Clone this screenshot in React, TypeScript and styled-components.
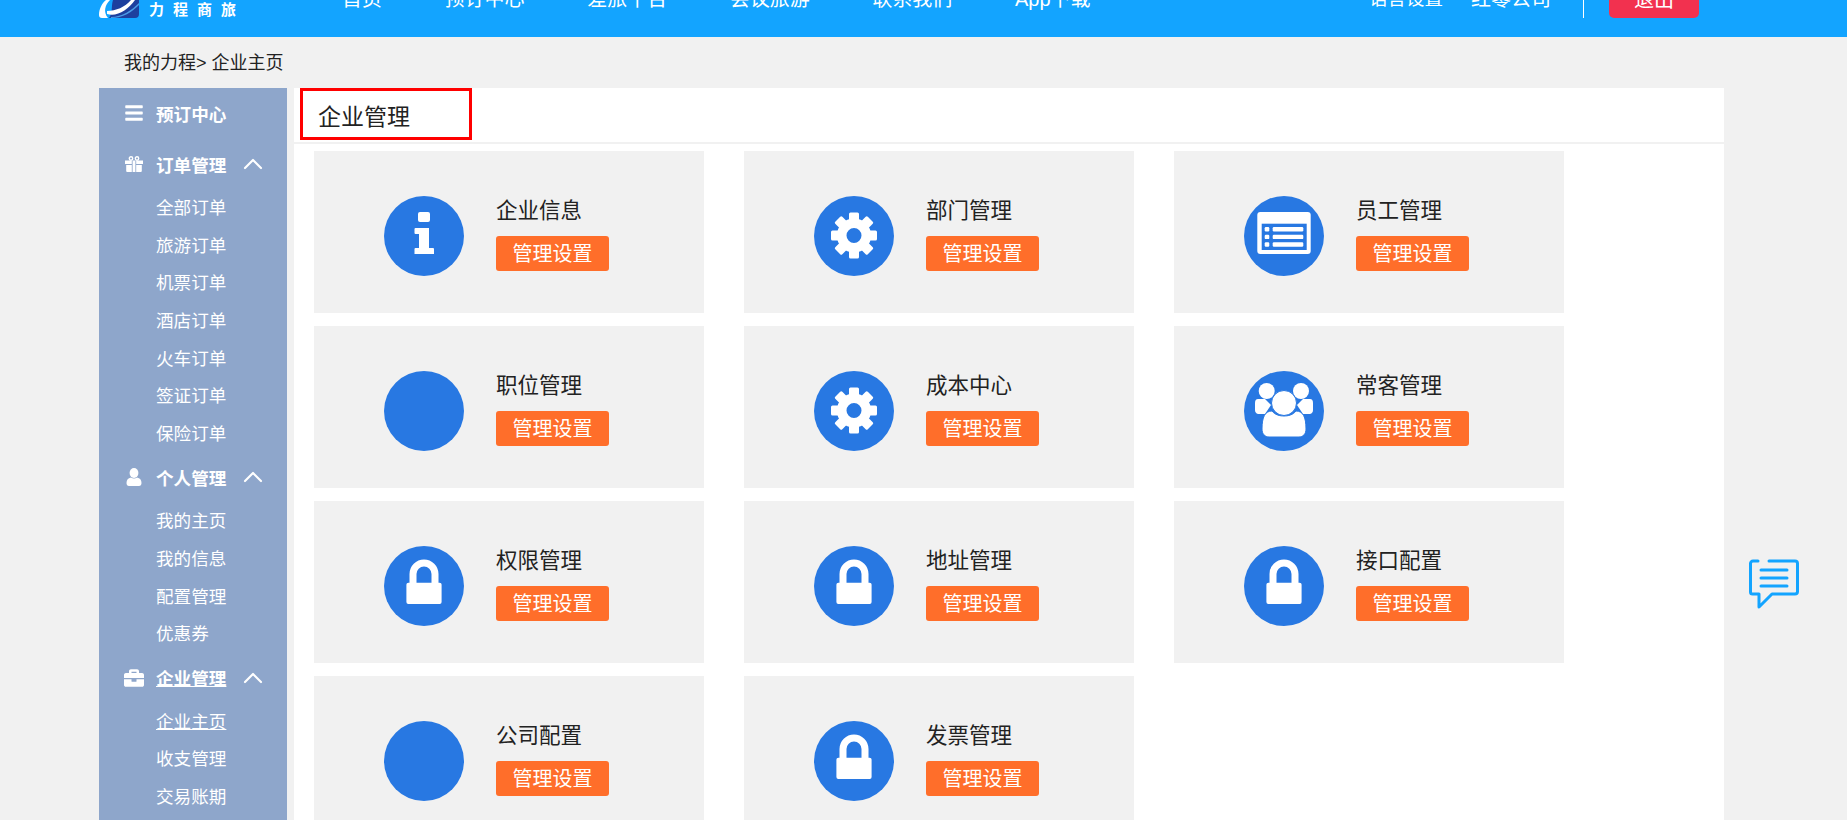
import * as React from 'react'
import styled, { createGlobalStyle } from 'styled-components'
import { FaBars, FaBriefcase } from 'react-icons/fa'
import { ChevronUp } from 'lucide-react'

const fontStack = '"Liberation Sans", "Noto Sans CJK SC", sans-serif';

const GlobalStyle = createGlobalStyle`
    html, body {
        margin: 0;
        padding: 0;
        background: #f1f1f1;
        font-family: ${fontStack};
    }
`;

//=================================/
const Page = styled.div`
    height: 100vh;
    overflow: hidden;
    display: flex;
    flex-direction: column;
    background: #f1f1f1;
`;

const Header = styled.header`
    flex: none;
    height: 37px;
    box-sizing: border-box;
    padding: 0 148px 0 99px;
    display: flex;
    align-items: flex-end;
    overflow: hidden;
    background: #13a4ff;
    color: #fff;
`;

const Logo = styled.div`
    flex: none;
    width: 204px;
    display: flex;
    align-items: flex-end;
    gap: 10px;
    padding-bottom: 19px;
`;

const LogoText = styled.span`
    font-size: 15px;
    font-weight: 700;
    letter-spacing: 9px;
    line-height: 20px;
    margin-bottom: -2px;
    white-space: nowrap;
`;

const MainNav = styled.nav`
    margin-left: 39px;
    display: flex;
    gap: 62.6px;
    padding-bottom: 24px;
`;

const NavItem = styled.span`
    font-size: 20px;
    line-height: 28px;
    white-space: nowrap;
`;

const UserBar = styled.div`
    margin-left: auto;
    display: flex;
    align-items: flex-end;
`;

const UserItem = styled.span<{ $size: number; $gap: number }>`
    font-size: ${props => props.$size}px;
    line-height: 28px;
    margin-right: ${props => props.$gap}px;
    padding-bottom: 24px;
    white-space: nowrap;
`;

const Divider = styled.span`
    width: 1px;
    height: 40px;
    margin: 0 25px 19px 0;
    background: #fff;
`;

const LogoutButton = styled.span`
    width: 90px;
    height: 48px;
    margin-bottom: 19px;
    border-radius: 0 0 5px 5px;
    background: #f2314f;
    font-size: 20px;
    line-height: 28px;
    text-align: center;
    padding-top: 16px;
    box-sizing: border-box;
`;

const Crumb = styled.div`
    flex: none;
    height: 51px;
    padding: 0 0 0 124px;
    font-size: 18px;
    line-height: 52px;
    color: #222;
    white-space: pre;
`;

const Body = styled.div`
    flex: 1;
    min-height: 0;
    display: flex;
    gap: 7px;
    padding-left: 99px;
`;

//=================================/
const Sidebar = styled.aside`
    flex: none;
    width: 188px;
    padding-top: 3px;
    background: #8ea6cb;
    color: #fff;
`;

const MenuHead = styled.div<{ $solo?: boolean }>`
    height: 44px;
    margin-bottom: ${props => props.$solo ? 7 : 4}px;
    padding-left: 25px;
    display: flex;
    align-items: center;
    font-size: 17.6px;
    font-weight: 700;
`;

const MenuIcon = styled.span`
    flex: none;
    width: 20px;
    margin-right: 12px;
    display: flex;
    justify-content: center;
`;

const MenuLabel = styled.span<{ $active?: boolean }>`
    text-decoration: ${props => props.$active ? 'underline' : 'none'};
`;

const MenuArrow = styled(ChevronUp)`
    margin-left: 11px;
`;

const SubMenu = styled.div`
    margin-bottom: 1.5px;
`;

const SubItem = styled.div<{ $active?: boolean }>`
    height: 37.7px;
    padding-left: 57px;
    font-size: 17.6px;
    line-height: 37.7px;
    text-decoration: ${props => props.$active ? 'underline' : 'none'};
`;

//=================================/
const Main = styled.main`
    flex: none;
    width: 1430px;
    background: #fff;
`;

const TitleBar = styled.div`
    height: 54px;
    padding-left: 6px;
    border-bottom: 2px solid #f1f1f1;
`;

const TitleBox = styled.h1`
    width: 172px;
    height: 52px;
    margin: 0;
    box-sizing: border-box;
    border: 3px solid #f00;
    padding-left: 15px;
    font-size: 23px;
    font-weight: 400;
    line-height: 52px;
    color: #222;
`;

const CardGrid = styled.div`
    display: grid;
    grid-template-columns: repeat(3, 390px);
    grid-auto-rows: 162px;
    column-gap: 40px;
    row-gap: 13px;
    padding: 7px 0 0 20px;
`;

const Card = styled.div`
    box-sizing: border-box;
    padding: 45px 0 0 70px;
    display: flex;
    gap: 32px;
    background: #f1f1f1;
`;

const Badge = styled.svg`
    flex: none;
    width: 80px;
    height: 80px;
`;

const CardText = styled.div`
    display: flex;
    flex-direction: column;
    align-items: flex-start;
    gap: 12px;
`;

const CardName = styled.div`
    height: 28px;
    font-size: 21.5px;
    line-height: 30px;
    color: #222;
`;

const SetupButton = styled.span`
    width: 113px;
    height: 35px;
    border-radius: 3px;
    background: #ff6e2a;
    color: #fff;
    font-size: 20px;
    line-height: 37px;
    text-align: center;
`;

const ChatFloat = styled.svg`
    position: fixed;
    left: 1749px;
    top: 559px;
    width: 50px;
    height: 50px;
`;
//=================================/

const BLUE = '#2878e2';

const InfoGlyph = () => (
    <g fill="#fff">
        <rect x="34" y="16" width="12" height="10" rx="2" />
        <path d="M30.5 33a1 1 0 0 1 1-1H45v20h4a1 1 0 0 1 1 1v5H30.5v-5a1 1 0 0 1 1-1H35V38h-3.5a1 1 0 0 1-1-1z" />
    </g>
);

const GearGlyph = () => (
    <g fill="#fff">
        {[0, 45, 90, 135, 180, 225, 270, 315].map(a => (
            <rect key={a} x="35" y="16.5" width="10" height="10" rx="1.5" transform={`rotate(${a} 40 39.5)`} />
        ))}
        <circle cx="40" cy="39.5" r="12.3" fill="none" stroke="#fff" strokeWidth="9.6" />
    </g>
);

const ListGlyph = () => (
    <g>
        <rect x="13.3" y="16" width="53.4" height="42" rx="3" fill="#fff" />
        <rect x="17.7" y="27.7" width="45" height="26.3" fill={BLUE} />
        {[31, 38.7, 46.3].map(y => (
            <g key={y} fill="#fff">
                <rect x="20.7" y={y} width="4.6" height="4.4" rx="1.2" />
                <rect x="28.7" y={y} width="30.6" height="4.4" rx="1.2" />
            </g>
        ))}
    </g>
);

const PeopleGlyph = () => (
    <g fill="#fff">
        <circle cx="22.7" cy="20" r="8" />
        <circle cx="57" cy="20" r="8" />
        <path d="M14 28h7l6 6-6 9h-7q-3-1-3-4v-7q0-4 3-4z" />
        <path d="M66 28h-7l-6 6 6 9h7q3-1 3-4v-7q0-4-3-4z" />
        <path d="M18 58c0-12 3-18 10-18 3 4 8 5 12 5s9-1 12-5c7 0 10 6 10 18 0 5-3 8-7 8H25c-4 0-7-3-7-8z" stroke={BLUE} strokeWidth="1" />
        <circle cx="40" cy="32" r="12.5" stroke={BLUE} strokeWidth="1" />
    </g>
);

const LockGlyph = () => (
    <g>
        <path d="M29 38V28a11 11 0 0 1 22 0v10" fill="none" stroke="#fff" strokeWidth="7" />
        <rect x="22.4" y="36.7" width="35.2" height="21.3" rx="2" fill="#fff" />
    </g>
);

const glyphs: Record<string, React.ReactNode> = {
    info: <InfoGlyph />,
    gear: <GearGlyph />,
    list: <ListGlyph />,
    people: <PeopleGlyph />,
    lock: <LockGlyph />,
    none: null,
};

const cards = [
    { name: '企业信息', icon: 'info' },
    { name: '部门管理', icon: 'gear' },
    { name: '员工管理', icon: 'list' },
    { name: '职位管理', icon: 'none' },
    { name: '成本中心', icon: 'gear' },
    { name: '常客管理', icon: 'people' },
    { name: '权限管理', icon: 'lock' },
    { name: '地址管理', icon: 'lock' },
    { name: '接口配置', icon: 'lock' },
    { name: '公司配置', icon: 'none' },
    { name: '发票管理', icon: 'lock' },
];

const UserIcon = () => (
    <svg width="16" height="18" viewBox="0 0 16 18" fill="#fff">
        <ellipse cx="8" cy="5" rx="4.4" ry="5" />
        <path d="M5 9.5c1.800 1.300 4.200 1.300 6 0 3 .5 4.500 2.500 4.500 5.500 0 2-1 3-2.500 3H3c-1.500 0-2.500-1-2.500-3 0-3 1.500-5 4.500-5.500z" />
    </svg>
);

const GiftIcon = () => (
    <svg width="18" height="16" viewBox="0 0 18 16">
        <circle cx="6" cy="2.500" r="1.700" fill="none" stroke="#fff" strokeWidth="1.400" />
        <circle cx="12" cy="2.500" r="1.700" fill="none" stroke="#fff" strokeWidth="1.400" />
        <path d="M0 4.500h6.800v3.500H0zM7.600 4.500h2.800V16H7.600zM11.200 4.500H18v3.500h-6.800zM1.200 9h5.600v7H2.200a1 1 0 0 1-1-1zM11.200 9h5.600v6a1 1 0 0 1-1 1h-4.600z" fill="#fff" />
    </svg>
);

const menus = [
    {
        title: '订单管理',
        icon: <GiftIcon />,
        items: ['全部订单', '旅游订单', '机票订单', '酒店订单', '火车订单', '签证订单', '保险订单'],
    },
    {
        title: '个人管理',
        icon: <UserIcon />,
        items: ['我的主页', '我的信息', '配置管理', '优惠券'],
    },
    {
        title: '企业管理',
        icon: <FaBriefcase size={20} />,
        active: true,
        items: ['企业主页', '收支管理', '交易账期'],
    },
];

const LogoMark = () => (
    <svg width="40" height="18" viewBox="0 0 40 18">
        <path d="M14 0H40V14a4 4 0 0 1-4 4H10C14 13 12 6 14 0z" fill="#1d3f9e" />
        <path d="M9 18H3a3 3 0 0 1-3-3C0 9 3 3 7 0h4C6 5 4 12 9 18z" fill="#fff" />
        <path d="M8 14C18 17 29 10 36 0h-4C26 7 17 11 8 11z" fill="#fff" />
        <path d="M12 17C23 17 33 10 40 3v2C33 12 24 18 12 18z" fill="#4b9be6" />
    </svg>
);

export default function App() {
    return (
        <Page>
            <GlobalStyle />
            <Header>
                <Logo>
                    <LogoMark />
                    <LogoText>力程商旅</LogoText>
                </Logo>
                <MainNav>
                    {['首页', '预订中心', '差旅平台', '会议旅游', '联系我们', 'App下载'].map(n => (
                        <NavItem key={n}>{n}</NavItem>
                    ))}
                </MainNav>
                <UserBar>
                    <UserItem $size={18.5} $gap={28}>语言设置</UserItem>
                    <UserItem $size={20} $gap={32}>红零公司</UserItem>
                    <Divider />
                    <LogoutButton>退出</LogoutButton>
                </UserBar>
            </Header>

            <Crumb>我的力程&gt; 企业主页</Crumb>

            <Body>
                <Sidebar>
                    <MenuHead $solo>
                        <MenuIcon><FaBars size={20} /></MenuIcon>
                        <MenuLabel>预订中心</MenuLabel>
                    </MenuHead>
                    {menus.map(m => (
                        <React.Fragment key={m.title}>
                            <MenuHead>
                                <MenuIcon>{m.icon}</MenuIcon>
                                <MenuLabel $active={m.active}>{m.title}</MenuLabel>
                                <MenuArrow size={32} strokeWidth={1.6} />
                            </MenuHead>
                            <SubMenu>
                                {m.items.map((s, i) => (
                                    <SubItem key={s} $active={m.active && i === 0}>{s}</SubItem>
                                ))}
                            </SubMenu>
                        </React.Fragment>
                    ))}
                </Sidebar>

                <Main>
                    <TitleBar>
                        <TitleBox>企业管理</TitleBox>
                    </TitleBar>
                    <CardGrid>
                        {cards.map(c => (
                            <Card key={c.name}>
                                <Badge viewBox="0 0 80 80">
                                    <circle cx="40" cy="40" r="40" fill={BLUE} />
                                    {glyphs[c.icon]}
                                </Badge>
                                <CardText>
                                    <CardName>{c.name}</CardName>
                                    <SetupButton>管理设置</SetupButton>
                                </CardText>
                            </Card>
                        ))}
                    </CardGrid>
                </Main>
            </Body>

            <ChatFloat viewBox="0 0 50 50" fill="none" stroke="#13a4ff" strokeWidth="3" strokeLinecap="round" strokeLinejoin="round">
                <path d="M9 2H4a2.500 2.500 0 0 0-2.500 2.500V33a2 2 0 0 0 2 2H10v13l13-13h23a2.500 2.500 0 0 0 2.500-2.500V4.500A2.500 2.500 0 0 0 46 2H20" />
                <path d="M12 11h26M12 19h26M12 27h26" />
            </ChatFloat>
        </Page>
    );
}
